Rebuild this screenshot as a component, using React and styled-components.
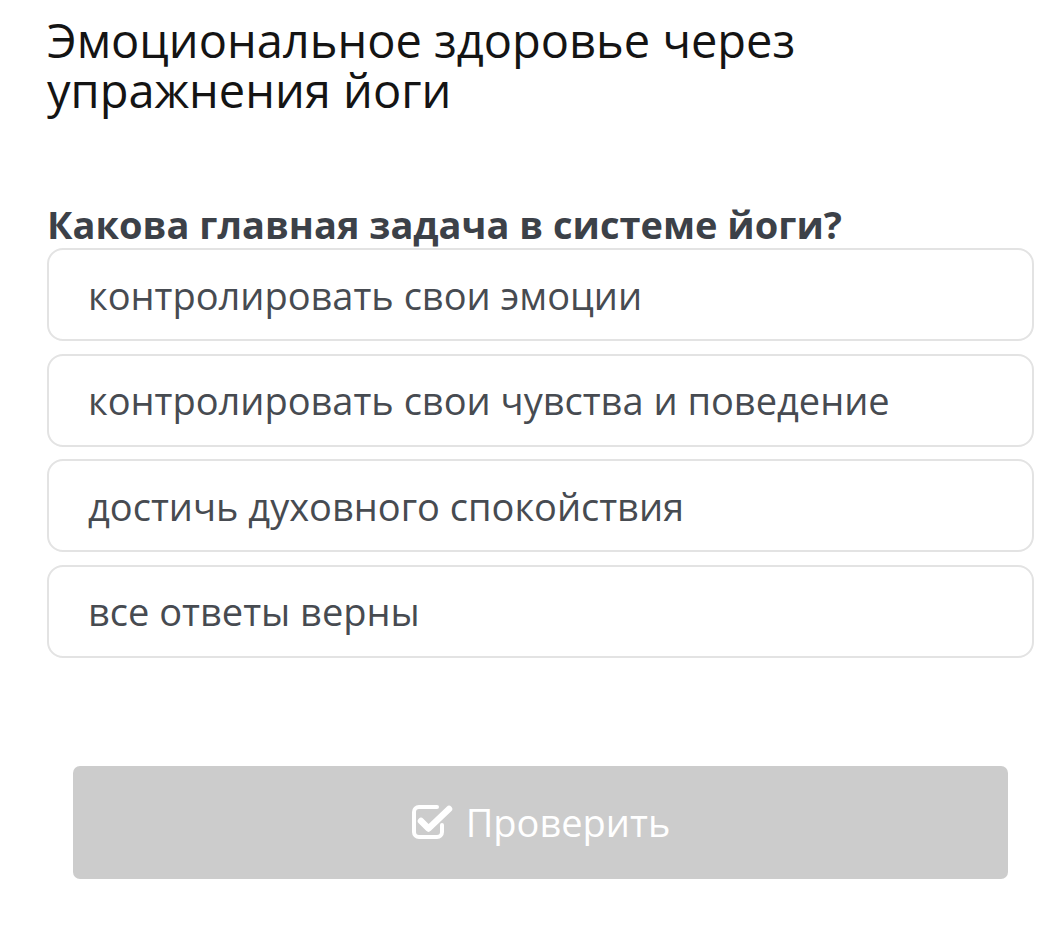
import React from "react";
import styled, { createGlobalStyle } from "styled-components";

const Global = createGlobalStyle`
  body {
    margin: 0;
    background: #ffffff;
    font-family: "Open Sans", "Noto Sans", sans-serif;
  }
`;

const answers = [
  "контролировать свои эмоции",
  "контролировать свои чувства и поведение",
  "достичь духовного спокойствия",
  "все ответы верны",
];

const Quiz = () => {
  return (
    <>
      <Global />
      <Page>
        <Title>Эмоциональное здоровье через упражнения йоги</Title>
        <Question>Какова главная задача в системе йоги?</Question>
        <Options>
          {answers.map((a) => (
            <Option key={a}>{a}</Option>
          ))}
        </Options>
        <CheckButton>
          <svg width="42" height="36" viewBox="0 0 42 36" fill="none">
            <path
              d="M26 3 H8 A5 5 0 0 0 3 8 V28 A5 5 0 0 0 8 33 H26 A5 5 0 0 0 31 28 V21"
              stroke="#fff"
              strokeWidth="4"
              strokeLinecap="round"
            />
            <path
              d="M10 17 L17.5 24.5 L38 5"
              stroke="#fff"
              strokeWidth="6.5"
              strokeLinecap="round"
              strokeLinejoin="round"
            />
          </svg>
          Проверить
        </CheckButton>
      </Page>
    </>
  );
};

const Page = styled.div`
  width: 1062px;
  height: 927px;
  padding: 15px 28px 0 47px;
  box-sizing: border-box;
  overflow: hidden;
`;

const Title = styled.h1`
  margin: 0;
  font-weight: 400;
  font-size: 47px;
  line-height: 50px;
  color: #141414;
  max-width: 800px;
`;

const Question = styled.h2`
  margin: 85px 0 0;
  font-weight: 700;
  font-size: 38px;
  line-height: 48px;
  color: #3c4148;
`;

const Options = styled.div`
  display: flex;
  flex-direction: column;
  gap: 12.5px;
`;

const Option = styled.div`
  height: 93px;
  box-sizing: border-box;
  border: 2px solid #e3e3e3;
  border-radius: 16px;
  padding: 0 0 0 39px;
  display: flex;
  align-items: center;
  font-size: 38px;
  color: #474b51;
`;

const CheckButton = styled.div`
  margin: 108px 26px 0 26px;
  height: 113px;
  border-radius: 7px;
  background: #cccccc;
  color: #ffffff;
  display: flex;
  align-items: center;
  justify-content: center;
  gap: 13px;
  font-size: 38px;
`;

export default Quiz;
